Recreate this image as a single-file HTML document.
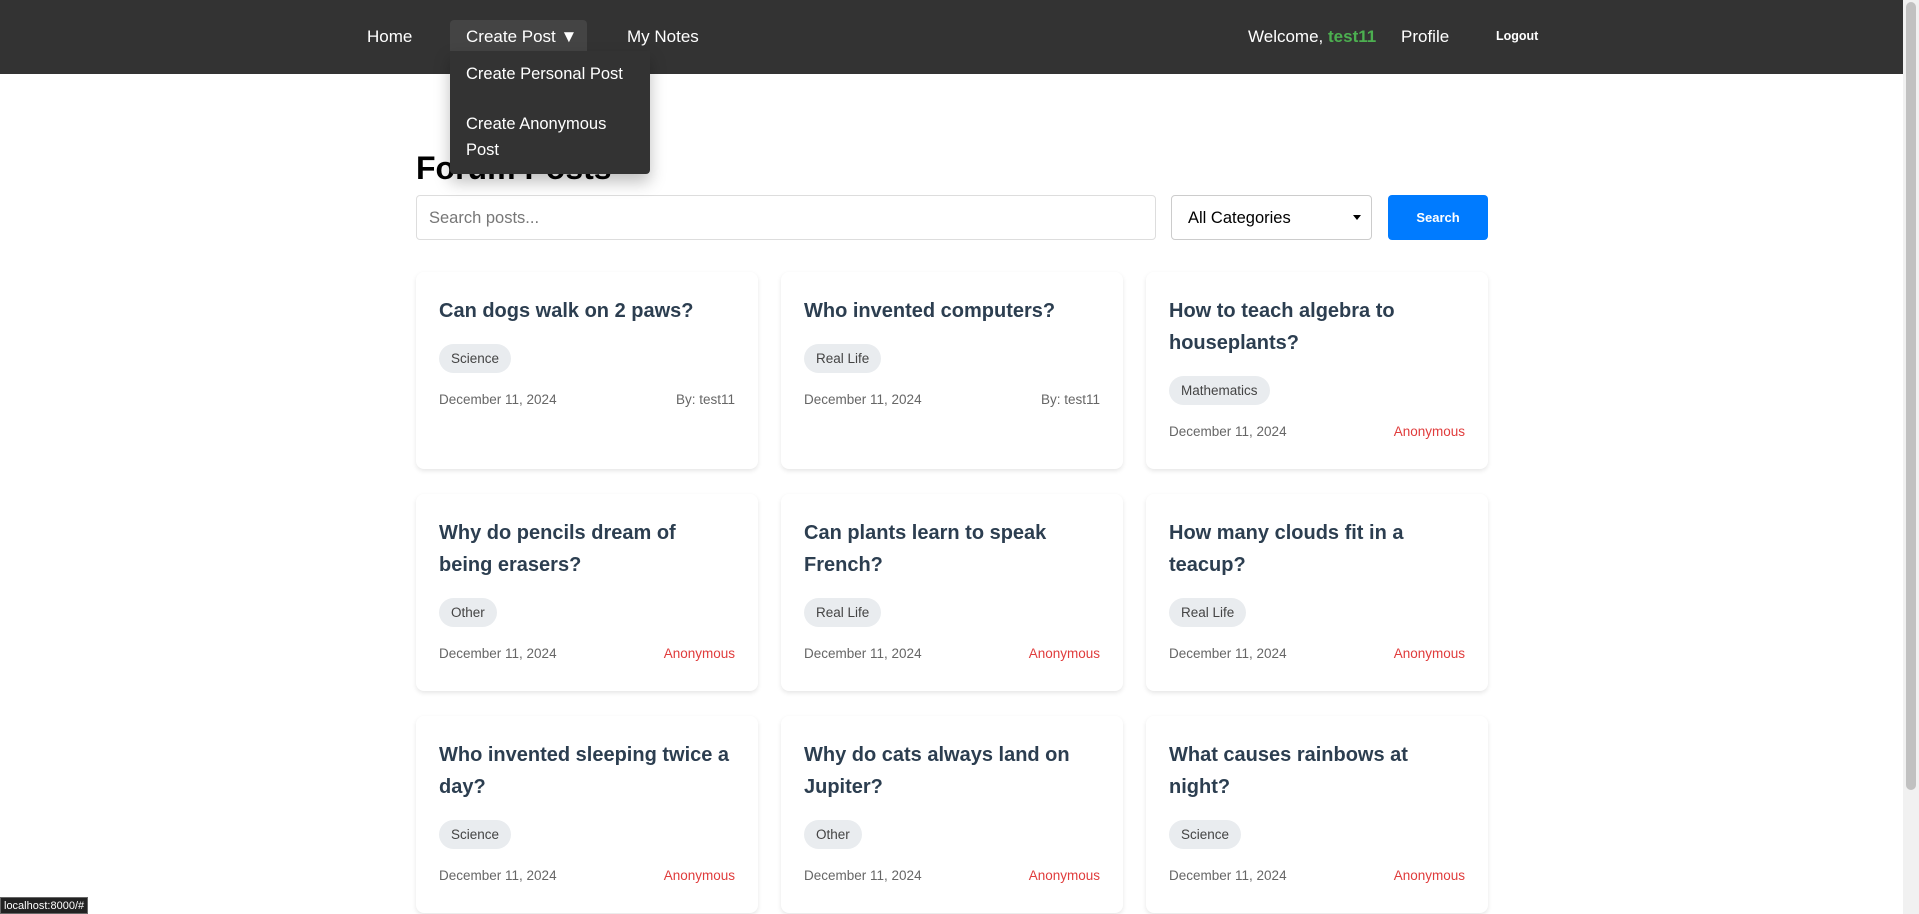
<!DOCTYPE html>
<html><head><style>
*{box-sizing:border-box;margin:0;padding:0}
body{width:1919px;height:914px;overflow:hidden;background:#fff;font-family:"Liberation Sans",Arial,sans-serif;position:relative}
.nav{position:absolute;left:0;top:0;width:1903px;height:74px;background:#333;color:#fff;font-size:17px}
.nav span{position:absolute;top:27px}
.cp{position:absolute;left:450px;top:20px;width:137px;height:31px;background:#444;border-radius:4px 4px 0 0}
.dd{position:absolute;left:450px;top:51px;width:200px;height:123px;background:#333;border-radius:0 0 4px 4px;box-shadow:0 8px 16px rgba(0,0,0,.25);color:#fff;font-size:16.5px;z-index:5}
.dd div{position:absolute;left:16px;line-height:26px}
.sb{position:absolute;right:0;top:0;width:16px;height:914px;background:#f1f1f1}
.sb div{position:absolute;left:3px;top:2px;width:10px;height:788px;background:#c1c1c1;border-radius:5px}
h1{position:absolute;left:416px;top:150px;font-size:32px;font-weight:bold;color:#000}
.in{position:absolute;left:416px;top:195px;width:740px;height:45px;border:1px solid #ddd;border-radius:4px;font-size:16.5px;color:#777;padding:13px 12px}
.sel{position:absolute;left:1171px;top:195px;width:201px;height:45px;border:1px solid #ccc;border-radius:4px;font-size:16.5px;color:#000;padding:13px 16px}
.sel:after{content:"";position:absolute;right:10px;top:19px;border:4px solid transparent;border-top:5px solid #000;width:0}
.btn{position:absolute;left:1388px;top:195px;width:100px;height:45px;background:#007bff;border-radius:4px;color:#fff;font-size:13px;font-weight:bold;text-align:center;line-height:45px}
.card{position:absolute;width:342px;height:197px;background:#fff;border-radius:8px;box-shadow:0 2px 5px rgba(0,0,0,.1);padding:23px 23px}
.t{font-size:20px;font-weight:bold;color:#2c3e50;line-height:32px}
.tag{display:inline-block;margin-top:17px;background:#e9ecef;border-radius:15px;height:29px;line-height:29px;padding:0 12px;font-size:13.5px;color:#444}
.f{display:flex;justify-content:space-between;margin-top:18px;font-size:13.5px;color:#666;line-height:17px}
.a{color:#e03c3c}
.st{position:absolute;left:0;top:897px;height:17px;background:#222;color:#fff;font-size:11px;padding:2px 3px;border:1px solid #666}
</style></head><body>
<div class="nav">
<span style="left:367px">Home</span>
<div class="cp"></div>
<span style="left:466px">Create Post ▼</span>
<span style="left:627px">My Notes</span>
<span style="left:1248px">Welcome, <b style="color:#4caf50">test11</b></span>
<span style="left:1401px">Profile</span>
<span style="left:1496px;top:29px;font-size:12.5px;font-weight:bold">Logout</span>
</div>
<div class="dd"><div style="top:10px">Create Personal Post</div><div style="top:60px">Create Anonymous<br>Post</div></div>
<div class="sb"><div></div></div>
<h1>Forum Posts</h1>
<div class="in">Search posts...</div>
<div class="sel">All Categories</div>
<div class="btn">Search</div>

<div class="card" style="left:416px;top:272px"><div class="t">Can dogs walk on 2 paws?</div><span class="tag">Science</span><div class="f"><span>December 11, 2024</span><span>By: test11</span></div></div>
<div class="card" style="left:781px;top:272px"><div class="t">Who invented computers?</div><span class="tag">Real Life</span><div class="f"><span>December 11, 2024</span><span>By: test11</span></div></div>
<div class="card" style="left:1146px;top:272px"><div class="t">How to teach algebra to<br>houseplants?</div><span class="tag">Mathematics</span><div class="f"><span>December 11, 2024</span><span class="a">Anonymous</span></div></div>

<div class="card" style="left:416px;top:494px"><div class="t">Why do pencils dream of<br>being erasers?</div><span class="tag">Other</span><div class="f"><span>December 11, 2024</span><span class="a">Anonymous</span></div></div>
<div class="card" style="left:781px;top:494px"><div class="t">Can plants learn to speak<br>French?</div><span class="tag">Real Life</span><div class="f"><span>December 11, 2024</span><span class="a">Anonymous</span></div></div>
<div class="card" style="left:1146px;top:494px"><div class="t">How many clouds fit in a<br>teacup?</div><span class="tag">Real Life</span><div class="f"><span>December 11, 2024</span><span class="a">Anonymous</span></div></div>

<div class="card" style="left:416px;top:716px"><div class="t">Who invented sleeping twice a<br>day?</div><span class="tag">Science</span><div class="f"><span>December 11, 2024</span><span class="a">Anonymous</span></div></div>
<div class="card" style="left:781px;top:716px"><div class="t">Why do cats always land on<br>Jupiter?</div><span class="tag">Other</span><div class="f"><span>December 11, 2024</span><span class="a">Anonymous</span></div></div>
<div class="card" style="left:1146px;top:716px"><div class="t">What causes rainbows at<br>night?</div><span class="tag">Science</span><div class="f"><span>December 11, 2024</span><span class="a">Anonymous</span></div></div>

<div class="st">localhost:8000/#</div>
</body></html>
